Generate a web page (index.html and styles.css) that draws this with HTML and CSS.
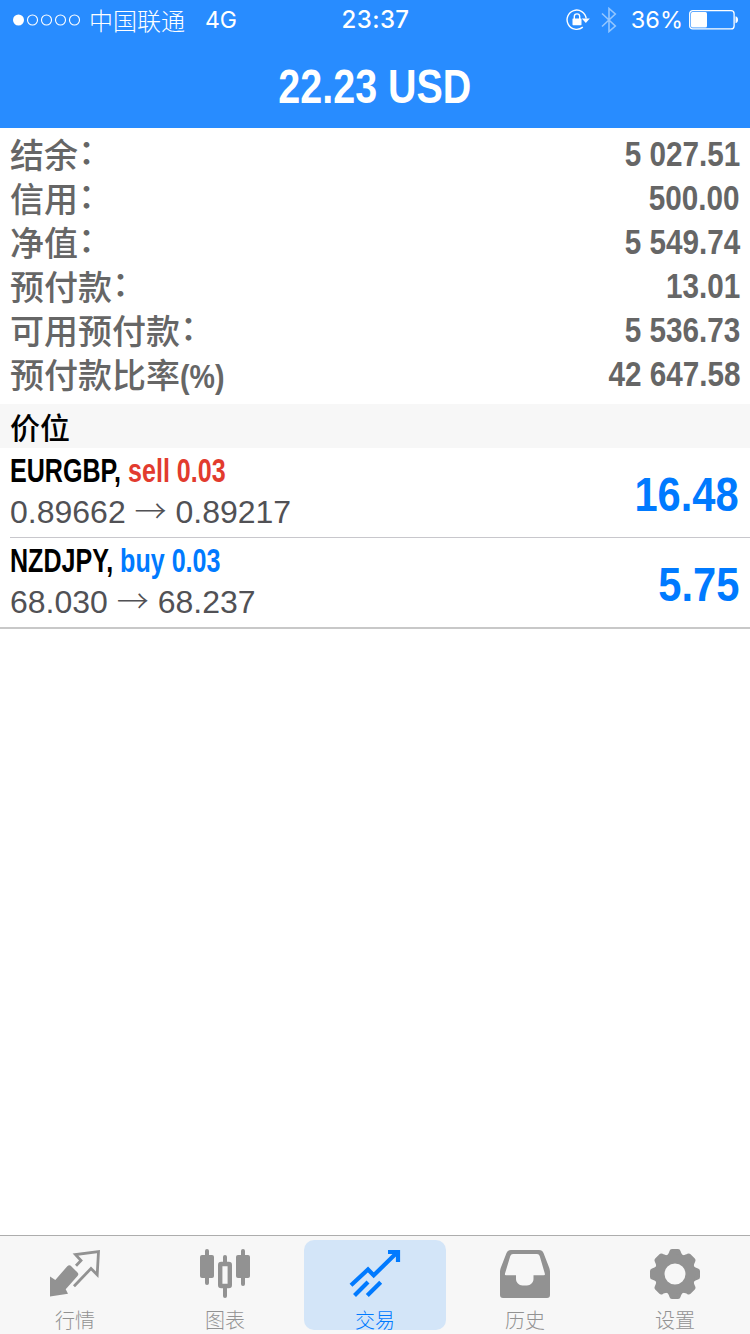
FILE: index.html
```html
<!DOCTYPE html>
<html lang="zh-CN">
<head>
<meta charset="utf-8">
<title>交易</title>
<link rel="stylesheet" href="styles.css">
</head>
<body>
<div class="app">
  <header class="header">
    <div class="status">
      <div class="status-left">
        <svg class="signal" width="70" height="14" viewBox="0 0 70 14"><circle cx="6.5" cy="7" r="5.5" fill="#fff"/><g fill="none" stroke="#fff" stroke-width="1.1"><circle cx="20.5" cy="7" r="5"/><circle cx="34.5" cy="7" r="5"/><circle cx="48.5" cy="7" r="5"/><circle cx="62.5" cy="7" r="5"/></g></svg>
        <span class="carrier">中国联通</span>
        <span class="network">4G</span>
      </div>
      <span class="clock">23:37</span>
      <div class="status-right">
        <svg class="lock" width="24" height="22" viewBox="0 0 24 22"><path d="M16.8 18.1A9.6 9.6 0 1 1 20.2 9.5" fill="none" stroke="#fff" stroke-width="1.4"/><path d="M15.8 9.5h8l-4 4.5z" fill="#fff"/><rect x="6.5" y="9.4" width="9" height="6.8" rx="0.6" fill="#fff"/><path d="M8.3 10V7.6a2.7 2.7 0 0 1 5.4 0V10" fill="none" stroke="#fff" stroke-width="1.4"/></svg>
        <svg class="bluetooth" width="16" height="26" viewBox="0 0 16 26"><path d="M1 6.5 14.3 19 8 24.5v-23L14.3 7 1 19.5" fill="none" stroke="#93c6ff" stroke-width="1.6"/></svg>
        <span class="percent">36%</span>
        <svg class="battery" width="50" height="20" viewBox="0 0 50 20"><rect x=".7" y=".7" width="44.4" height="18.2" rx="3" fill="none" stroke="#fff" stroke-width="1.3"/><rect x="2" y="2" width="16" height="15.6" rx="1.5" fill="#fff"/><path d="M46.5 6.3c3.4.5 3.4 6.5 0 7z" fill="#fff"/></svg>
      </div>
    </div>
    <h1 class="title"><span class="condensed">22.23 USD</span></h1>
  </header>

  <section class="summary">
    <div class="line"><span>结余<i class="colon">：</i></span><b class="value ends-in-one">5 027.51</b></div>
    <div class="line"><span>信用<i class="colon">：</i></span><b class="value">500.00</b></div>
    <div class="line"><span>净值<i class="colon">：</i></span><b class="value">5 549.74</b></div>
    <div class="line"><span>预付款<i class="colon">：</i></span><b class="value ends-in-one">13.01</b></div>
    <div class="line"><span>可用预付款<i class="colon">：</i></span><b class="value">5 536.73</b></div>
    <div class="line"><span>预付款比率<b class="unit">(%)</b></span><b class="value">42 647.58</b></div>
  </section>

  <h2 class="section-title">价位</h2>

  <main class="positions">
    <article class="position">
      <div class="details">
        <div class="symbol">EURGBP, <span class="sell">sell 0.03</span></div>
        <div class="prices">0.89662 <span class="arrow">→</span> 0.89217</div>
      </div>
      <b class="profit">16.48</b>
    </article>
    <article class="position">
      <div class="details">
        <div class="symbol">NZDJPY, <span class="buy">buy 0.03</span></div>
        <div class="prices">68.030 <span class="arrow">→</span> 68.237</div>
      </div>
      <b class="profit">5.75</b>
    </article>
  </main>

  <nav class="tabs">
    <a class="tab">
      <svg class="icon" width="52" height="52" viewBox="0 0 52 52"><path d="M1 28.5 6.3 32 18.3 18.2Q20.5 16.3 22.5 18.4L28.5 24.5Q30.2 26.3 28.5 28L16.7 41.2 19 45.7 1 48.5z" fill="currentColor"/><path d="M27 17.8 32 12.5 26.5 6.6 49.5 3.5 48.2 26.7 42 20.5 25 38.3" fill="none" stroke="currentColor" stroke-width="2.8"/></svg>
      <span>行情</span>
    </a>
    <a class="tab">
      <svg class="icon" width="52" height="52" viewBox="0 0 52 52"><g fill="currentColor"><rect x="1" y="7" width="14" height="23" rx="2"/><rect x="6" y="1" width="4" height="36" rx="2"/><rect x="37" y="7" width="14" height="23" rx="2"/><rect x="42" y="1" width="4" height="37" rx="2"/><rect x="24" y="7" width="4" height="9" rx="2"/><rect x="24" y="38" width="4" height="12" rx="2"/></g><rect x="21.2" y="16" width="9.6" height="22" rx="1" fill="none" stroke="currentColor" stroke-width="4.4"/></svg>
      <span>图表</span>
    </a>
    <a class="tab active">
      <svg class="icon" width="52" height="52" viewBox="0 0 52 52"><g fill="none" stroke="currentColor" stroke-width="4.2"><path d="M2 37.3 19 21.5 24.7 27.3 48 4.5M39 4H49V14M5.5 47.5 19 34M18.3 47.5 31.7 34.2"/></g></svg>
      <span>交易</span>
    </a>
    <a class="tab">
      <svg class="icon" width="52" height="52" viewBox="0 0 52 52"><path fill="currentColor" fill-rule="evenodd" d="M12 2H40Q43.4 2 44.5 5L50.3 20Q51 22 51 24V47Q51 50 48 50H4Q1 50 1 47V24Q1 22 1.7 20L7.5 5Q8.6 2 12 2zM14 6Q12 6 11.3 8L6 25.5Q5.5 27.3 7 27.3H17V31C17 34.5 20 37.5 23.5 37.5H28C31.5 37.5 34.5 34.5 34.5 31V27.3H44.8Q46.4 27.3 45.8 25.5L40.7 8Q40 6 38 6z"/></svg>
      <span>历史</span>
    </a>
    <a class="tab">
      <svg class="icon" width="52" height="52" viewBox="-26 -26 52 52"><defs><path id="tooth" d="M-9-18C-6.5-19.5-6-21.5-5.5-23Q-5-25-3-25H3Q5-25 5.5-23C6-21.5 6.5-19.5 9-18z"/></defs><g fill="currentColor"><use href="#tooth"/><use href="#tooth" transform="rotate(45)"/><use href="#tooth" transform="rotate(90)"/><use href="#tooth" transform="rotate(135)"/><use href="#tooth" transform="rotate(180)"/><use href="#tooth" transform="rotate(225)"/><use href="#tooth" transform="rotate(270)"/><use href="#tooth" transform="rotate(315)"/></g><circle r="15.3" fill="none" stroke="currentColor" stroke-width="9.6"/></svg>
      <span>设置</span>
    </a>
  </nav>
</div>
</body>
</html>
```
FILE: styles.css
```css
* { box-sizing: border-box; }
body {
  margin: 0;
  background: #fff;
  font-family: "Liberation Sans", "Noto Sans CJK SC", sans-serif;
}
.app { display: flex; flex-direction: column; height: 1334px; width: 750px; overflow: hidden; }
svg { display: block; flex: none; }

.header { height: 128px; background: #288cff; color: #fff; }
.status {
  display: grid;
  grid-template-columns: 1fr auto 1fr;
  align-items: center;
  height: 40px;
  padding: 0 11px 0 12px;
  font-family: Inter, "Noto Sans CJK SC", sans-serif;
  font-size: 24px;
  line-height: 40px;
}
.status-left, .status-right { display: flex; align-items: center; height: 40px; }
.status-right { justify-content: flex-end; }
.carrier { margin-left: 7px; font-family: "Noto Sans CJK SC", sans-serif; font-weight: 300; }
.network { margin-left: 20px; font-size: 23px; }
.clock { font-weight: 500; font-size: 24px; letter-spacing: 0.4px; }
.lock { margin-right: 11px; }
.bluetooth { margin-right: 14px; }
.percent { margin-right: 6px; font-size: 23.5px; }
.title { margin: 0; text-align: center; font-size: 49px; line-height: 92px; }
.condensed { display: inline-block; transform: scaleX(0.805); white-space: nowrap; }

.summary { height: 276px; padding: 4px 10px 0; color: #666; }
.line {
  display: flex;
  justify-content: space-between;
  height: 44px;
  font-family: "Noto Sans CJK SC", sans-serif;
  font-size: 34px;
  font-weight: 500;
  line-height: 44px;
}
.colon { display: inline-block; font-style: normal; transform: translateY(-4px); }
.unit { display: inline-block; font-family: "Liberation Sans", sans-serif; transform: scaleX(0.84); transform-origin: left; }
.value {
  font-family: "Liberation Sans", sans-serif;
  font-size: 34.5px;
  line-height: 45px;
  transform: scaleX(0.86);
  transform-origin: right;
}

.section-title {
  margin: 0;
  height: 44px;
  padding-left: 10px;
  background: #f7f7f7;
  color: #000;
  font-family: "Noto Sans CJK SC", sans-serif;
  font-size: 30px;
  font-weight: 500;
  line-height: 44px;
}

.positions { flex: 1; }
.position { display: flex; justify-content: space-between; height: 90px; margin-left: 10px; padding-right: 11px; border-bottom: 1px solid #c8c7cc; }
.position:last-child { height: 91px; margin-left: 0; padding-left: 10px; border-bottom: 2px solid #c8c8c8; }
.symbol {
  height: 44px;
  font-size: 33px;
  font-weight: 700;
  line-height: 46px;
  transform: scaleX(0.76);
  transform-origin: left;
  white-space: nowrap;
}
.sell { color: #e23b2e; }
.buy { color: #007aff; }
.prices { height: 42px; color: #515155; font-size: 32px; line-height: 40px; white-space: nowrap; }
.arrow { font-family: "Noto Sans CJK SC", sans-serif; font-weight: 300; line-height: 1; }
.profit { color: #007aff; font-size: 49px; line-height: 93px; transform: scaleX(0.85); transform-origin: right; }

.tabs { display: flex; height: 99px; padding-top: 4px; background: #f7f7f7; border-top: 1px solid #adadad; }
.tab {
  flex: 1;
  display: flex;
  flex-direction: column;
  align-items: center;
  height: 90px;
  margin: 0 4px;
  padding-top: 8px;
  border-radius: 10px;
  color: #929292;
  font-family: "Noto Sans CJK SC", sans-serif;
  font-size: 20px;
  font-weight: 300;
  line-height: 24px;
}
.tab span { margin-top: 8px; }
.active { background: #d3e5f8; color: #007aff; }
```
